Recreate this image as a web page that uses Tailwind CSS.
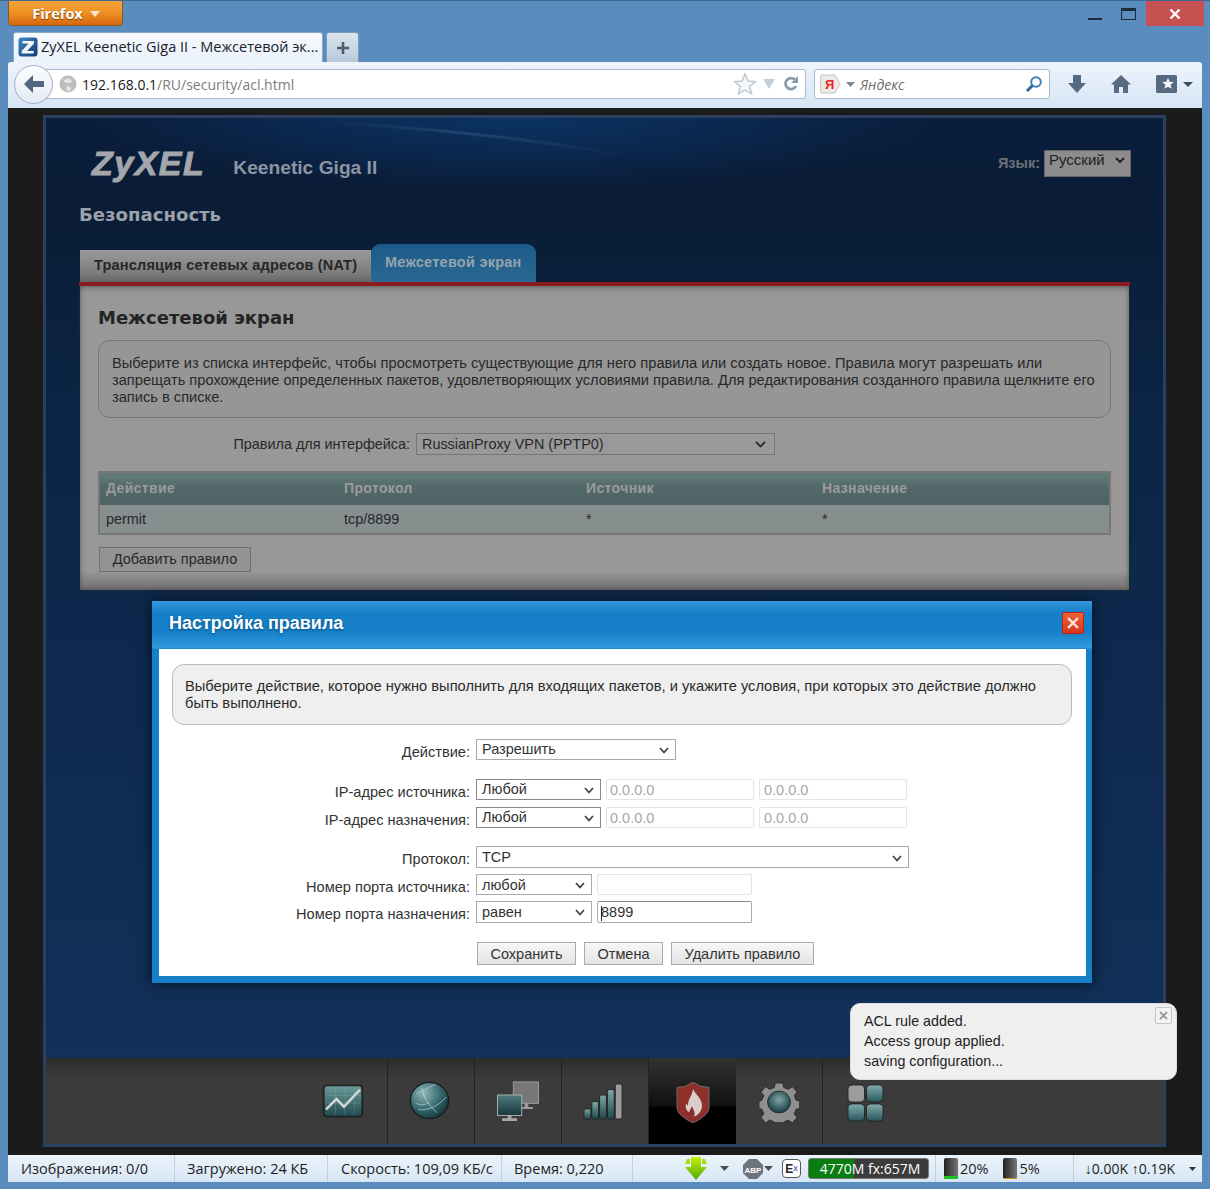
<!DOCTYPE html>
<html lang="ru">
<head>
<meta charset="utf-8">
<title>ZyXEL Keenetic Giga II</title>
<script src="https://cdn.jsdelivr.net/npm/@tailwindcss/browser@4"></script>
</head>
<body class="m-0">
<div class="relative w-[1210px] h-[1189px] overflow-hidden flex flex-col bg-[#5a8dbd] border-t border-[#3d688f] font-['Liberation_Sans',Arial,sans-serif]">

  <!-- title row -->
  <div class="h-[31px] flex items-start pl-[8px] shrink-0">
    <div class="w-[115px] h-[26px] -mt-px pt-[2px] rounded-b-[4px] border border-[#8a5a22] bg-[linear-gradient(#f4a23c,#ef9425_45%,#d7660f)] flex items-center justify-center gap-[7px] text-white font-bold text-[14.500px] font-['Open_Sans',sans-serif] pl-[1px] [text-shadow:0_1px_1px_#7a3c00]">
      <span>Firefox</span>
      <svg width="10" height="6" viewBox="0 0 10 6"><path d="M0 0h10L5 6z" fill="#fbe6cb"/></svg>
    </div>
    <div class="ml-auto flex items-start">
      <div class="w-[14px] h-[2px] bg-[#1c2b3a] mt-[17px] mr-[19px]"></div>
      <div class="w-[15px] h-[12px] border border-[#1c2b3a] border-t-[3px] mt-[7px] mr-[10px]"></div>
      <div class="w-[58px] h-[25px] mr-[6px] bg-[#c75050] flex items-center justify-center">
        <svg width="12" height="12" viewBox="0 0 12 12"><path d="M1.500 1.500l9 9M10.500 1.500l-9 9" stroke="#fff" stroke-width="2.400"/></svg>
      </div>
    </div>
  </div>

  <!-- tabs -->
  <div class="h-[30px] shrink-0 flex items-end pl-[13px] gap-[3px]">
    <div class="w-[310px] h-[30px] rounded-t-[3px] border border-b-0 border-[#8fa9c4] bg-[linear-gradient(#f7fafd,#e9f1fa)] flex items-center pl-[4px] gap-[3px] pb-px text-[#16212c] text-[14.500px] font-['Open_Sans',sans-serif] whitespace-nowrap overflow-hidden">
      <svg width="20" height="20" viewBox="0 0 20 20" class="shrink-0">
        <defs><linearGradient id="fav" x1="0" y1="0" x2="1" y2="1"><stop offset="0" stop-color="#3f86c8"/><stop offset="1" stop-color="#113a70"/></linearGradient></defs>
        <rect x="0.500" y="0.500" width="19" height="19" rx="3" fill="url(#fav)"/>
        <path d="M4.500 4h11.500v2.600L9 14h6.800v2.600H3.600v-2.600L10.600 6.600H4.500z" fill="#f3f6fa"/>
      </svg>
      <span>ZyXEL Keenetic Giga II - Межсетевой эк...</span>
    </div>
    <div class="w-[33px] h-[30px] rounded-t-[3px] border border-b-0 border-[#7c99b8] bg-[linear-gradient(#dbe5ef,#b9c9da)] flex items-center justify-center">
      <svg width="14" height="14" viewBox="0 0 14 14"><path d="M7 1v12M1 7h12" stroke="#4f5d6b" stroke-width="2.600"/></svg>
    </div>
  </div>

  <!-- nav -->
  <div class="relative z-10 h-[46px] shrink-0 mx-[8px] pb-[2px] rounded-t-[3px] bg-[linear-gradient(#eef4fc,#d6e5f5)] flex items-center font-['Open_Sans',sans-serif]">
    <div class="relative z-10 ml-[6px] w-[39px] h-[39px] rounded-full border border-[#9eb0c3] bg-[linear-gradient(#fdfeff,#e3eaf2)] flex items-center justify-center shrink-0">
      <svg width="22" height="20" viewBox="0 0 22 20"><path d="M10 1L1 10l9 9v-6h11V7H10z" fill="#50677f"/></svg>
    </div>
    <div class="-ml-[13px] w-[766px] h-[30px] rounded-r-[3px] border border-[#a9bace] bg-white flex items-center pl-[18px] pr-[6px] shrink-0">
      <svg width="18" height="18" viewBox="0 0 18 18" class="shrink-0"><circle cx="9" cy="9" r="8.500" fill="#bdbdbd"/><path d="M4 4c2 1 4 0 6-1 1 2 3 2 3 4-2 0-3 2-5 1S5 7 4 4zM8 11c2 0 4 1 4 3l-3 3c-1-2-2-3-1-6z" fill="#e6e6e6"/></svg>
      <span class="ml-[5px] text-[14px] text-[#1b1b1b] whitespace-nowrap">192.168.0.1<span class="text-[#7d7d7d]">/RU/security/acl.html</span></span>
      <svg width="24" height="24" viewBox="0 0 24 24" class="ml-auto mr-[-1px]"><path d="M12 2l3 7 7.500.6-5.700 4.900 1.800 7.300L12 18l-6.600 3.800 1.800-7.300L1.500 9.600 9 9z" fill="#f6f6f6" stroke="#bcc6d0" stroke-width="1.400"/></svg>
      <svg width="12" height="10" viewBox="0 0 12 10" class="ml-[7px]"><path d="M0 0h12L6 10z" fill="#c3cfdb"/></svg>
      <svg width="16" height="16" viewBox="0 0 16 16" class="ml-[8px]"><path d="M13 10a5.500 5.500 0 1 1-1-6.200" fill="none" stroke="#8a9cae" stroke-width="2.800"/><path d="M15 0v7H8z" fill="#8a9cae"/></svg>
    </div>
    <div class="ml-[8px] w-[236px] h-[30px] rounded-[3px] border border-[#a9bace] bg-white flex items-center pl-[5px] pr-[5px] shrink-0">
      <svg width="21" height="20" viewBox="0 0 21 20" class="shrink-0"><path d="M2 1h13l5 9-5 9H2a1.500 1.500 0 0 1-1.500-1.500v-15A1.500 1.500 0 0 1 2 1z" fill="#eceae6" stroke="#c6c6c6"/><text x="5" y="15" font-size="13" font-weight="700" fill="#e8231d" font-family="Liberation Sans">Я</text></svg>
      <svg width="9" height="5" viewBox="0 0 9 5" class="ml-[5px]"><path d="M0 0h9L4.500 5z" fill="#7d8790"/></svg>
      <span class="ml-[5px] text-[14px] italic text-[#6f6f6f]">Яндекс</span>
      <svg width="18" height="18" viewBox="0 0 18 18" class="ml-auto mr-[1px]"><circle cx="11" cy="7" r="4.800" fill="none" stroke="#3c80bd" stroke-width="2"/><path d="M7.500 10.500L2 16" stroke="#2d6aa5" stroke-width="3"/></svg>
    </div>
    <svg width="18" height="20" viewBox="0 0 18 20" class="ml-[18px]"><path d="M5 1h8v8h5l-9 10L0 9h5z" fill="#566b81"/></svg>
    <svg width="20" height="20" viewBox="0 0 20 20" class="ml-[25px]"><path d="M10 1L0 10.500h3V19h5v-6h4v6h5v-8.500h3z" fill="#566b81"/></svg>
    <svg width="21" height="18" viewBox="0 0 21 18" class="ml-[25px]"><rect width="21" height="18" rx="1.500" fill="#566b81"/><path d="M12 3l1.700 3.700 4 .4-3 2.700.9 4-3.600-2.100-3.600 2.100.9-4-3-2.700 4-.4z" fill="#f3f6fa"/></svg>
    <svg width="10" height="5" viewBox="0 0 10 5" class="ml-[6px]"><path d="M0 0h10L5 5z" fill="#3b4d5f"/></svg>
  </div>

  <!-- browser content -->
  <div class="h-[1047px] shrink-0 mx-[8px] bg-[#1b1b1b] pt-[7px] pl-[35px] pr-[36px]">
    <div class="h-[1032px] border-[3px] border-[#2d3f5f] flex flex-col">
      <div class="relative h-[940px] shrink-0 bg-[radial-gradient(ellipse_420px_70px_at_42%_0%,#0b3364,transparent),linear-gradient(#0a1e3c,#0a1c36_90px,#0b2546_300px,#123059)]">
        <svg class="absolute left-[270px] top-0" width="320" height="50" viewBox="0 0 320 50" fill="none">
          <defs><linearGradient id="s" x1="0" y1="0" x2="1" y2="0"><stop offset="0" stop-color="#6f8fb5" stop-opacity="0"/><stop offset=".5" stop-color="#6f8fb5" stop-opacity=".22"/><stop offset="1" stop-color="#6f8fb5" stop-opacity="0"/></linearGradient></defs>
          <path d="M0 3c90 6 190 14 310 34" stroke="url(#s)" stroke-width="3"/>
        </svg>
        <!-- header -->
        <div class="relative h-[82px] flex items-start">
          <div class="ml-[46px] mt-[26px] text-[34px] leading-[38px] font-bold italic tracking-[1.500px] text-[#a3a6ab] [-webkit-text-stroke:1px_#a3a6ab]">ZyXEL</div>
          <div class="ml-[28px] mt-[38px] text-[19.200px] leading-[24px] font-bold text-[#8b95a4]">Keenetic Giga II</div>
          <div class="ml-auto mr-[32px] mt-[32px] flex items-center gap-[4px]">
            <span class="text-[14.500px] font-bold text-[#6b7077]">Язык:</span>
            <div class="w-[87px] h-[27px] bg-[#8c8c8c] border border-[#666] flex items-start justify-between pl-[4px] pr-[5px] text-[15px] leading-[18px] text-[#222]">
              <span>Русский</span>
              <svg width="10" height="7" viewBox="0 0 10 7" class="mt-[6px]"><path d="M1 1l4 4L9 1" fill="none" stroke="#222" stroke-width="2"/></svg>
            </div>
          </div>
        </div>
        <div class="relative ml-[33px] h-[30px] text-[18.100px] leading-[30px] font-bold font-['DejaVu_Sans',sans-serif] text-[#9aa1aa]">Безопасность</div>
        <!-- tabs -->
        <div class="relative ml-[33px] mt-[14px] h-[38px] flex items-end">
          <div class="w-[291px] h-[32px] ml-px bg-[linear-gradient(#9a9a9a,#7e7e7e_70%,#666)] flex items-center pl-[14px] pb-[1px] text-[14.500px] font-bold tracking-[0.2px] text-[#262626] whitespace-nowrap">Трансляция сетевых адресов (NAT)</div>
          <div class="w-[165px] h-[38px] rounded-t-[9px] bg-[linear-gradient(#1d5a88,#2a6792)] flex items-center pl-[14px] pb-[1px] text-[14.500px] font-bold tracking-[0.25px] text-[#96a4ae] whitespace-nowrap">Межсетевой экран</div>
        </div>
        <!-- panel -->
        <div class="relative ml-[33px] w-[1051px] h-[4px] bg-[#8a1c20]"></div>
        <div class="relative ml-[33px] w-[1051px] h-[305px] border-r border-b border-l border-[#16263a] bg-[linear-gradient(#8a8a8a,#989898_10px,#989898_285px,#6f6f6f)] shadow-[inset_0_0_5px_#555] pt-[18px] px-[18px]">
          <div class="h-[27px] text-[18px] leading-[27px] font-bold font-['DejaVu_Sans',sans-serif] text-[#242424]">Межсетевой экран</div>
          <div class="mt-[9px] h-[78px] rounded-[12px] border border-[#777] bg-[#969696] pl-[13px] pr-[12px] pt-[14px] text-[14.650px] leading-[17px] text-[#282828]">Выберите из списка интерфейс, чтобы просмотреть существующие для него правила или создать новое. Правила могут разрешать или запрещать прохождение определенных пакетов, удовлетворяющих условиями правила. Для редактирования созданного правила щелкните его запись в списке.</div>
          <div class="mt-[14px] flex items-center">
            <span class="w-[312px] text-right pt-[2px] text-[14.400px] text-[#282828]">Правила для интерфейса:</span>
            <div class="ml-[6px] w-[359px] h-[22px] pt-[2px] bg-[#999] border border-[#777] flex items-center justify-between pl-[5px] pr-[8px] text-[14.400px] text-[#282828]">
              <span>RussianProxy VPN (PPTP0)</span>
              <svg width="11" height="7" viewBox="0 0 11 7"><path d="M1 1l4.500 4.500L10 1" fill="none" stroke="#2c2c2c" stroke-width="1.800"/></svg>
            </div>
          </div>
          <div class="mt-[15px] h-[64px] border-2 border-[#777] flex flex-col">
            <div class="h-[32px] bg-[linear-gradient(#5f7878,#5f7878_4px,#536969_14px,#4e6464)] grid grid-cols-[238px_242px_236px_1fr] items-center pl-[6px] text-[14px] font-bold tracking-[0.36px] text-[#9b9b9b]">
              <span>Действие</span><span>Протокол</span><span>Источник</span><span>Назначение</span>
            </div>
            <div class="flex-1 pt-[2px] bg-[#868e8e] grid grid-cols-[238px_242px_236px_1fr] items-center pl-[6px] text-[14.400px] text-[#23282c]">
              <span>permit</span><span>tcp/8899</span><span>*</span><span>*</span>
            </div>
          </div>
          <div class="mt-[12px] ml-px w-[152px] h-[25px] pt-[2px] border border-[#6f6f6f] bg-[#939393] flex items-center justify-center text-[14.500px] text-[#282828]">Добавить правило</div>
        </div>
        <!-- /panel -->
      </div>

      <!-- bottom menu -->
      <div class="h-[86px] shrink-0 bg-[linear-gradient(#2c2c2c,#3b3b3b_20px)] flex pl-[255px]">
        <div class="w-[87px] h-full border-r border-[#222] flex items-start justify-center pt-[26px]">
          <svg width="42" height="34" viewBox="0 0 44 36" class="-ml-[3px]">
            <defs><linearGradient id="t" x1="0" y1="0" x2="0" y2="1"><stop offset="0" stop-color="#6b9a9c"/><stop offset="1" stop-color="#1f4a4f"/></linearGradient></defs>
            <rect x="1.500" y="1.500" width="41" height="33" rx="4" fill="url(#t)" stroke="#222" stroke-width="2"/>
            <path d="M4 27l11-11 8 8L40 6" fill="none" stroke="#d6d8d8" stroke-width="2.600"/>
            <path d="M4 20h36M4 12h36M14 4v28M24 4v28M34 4v28" stroke="#a8c0c0" stroke-opacity=".25"/>
          </svg>
        </div>
        <div class="w-[87px] h-full border-r border-[#222] flex items-start justify-center pt-[23px]">
          <svg width="41" height="39" viewBox="0 0 44 44" preserveAspectRatio="none" class="-ml-[3px]">
            <defs><radialGradient id="g" cx=".35" cy=".3" r=".8"><stop offset="0" stop-color="#8fb7b8"/><stop offset=".6" stop-color="#2f6368"/><stop offset="1" stop-color="#0f2e32"/></radialGradient></defs>
            <circle cx="22" cy="22" r="20.500" fill="url(#g)" stroke="#1c1c1c" stroke-width="1.500"/>
            <path d="M8 14c8-2 14-8 20-10M14 8c1 10 8 20 16 28M10 32c8 2 20-2 30-14M22 24c-5 3-9 4-15 1" fill="none" stroke="#c6dadb" stroke-opacity=".7"/>
          </svg>
        </div>
        <div class="w-[87px] h-full border-r border-[#222] flex items-start justify-center pt-[23px]">
          <svg width="44" height="41" viewBox="0 0 46 44">
            <defs><linearGradient id="m" x1="0" y1="0" x2="0" y2="1"><stop offset="0" stop-color="#4d7b7e"/><stop offset="1" stop-color="#17383c"/></linearGradient></defs>
            <rect x="18" y="1" width="27" height="23" fill="#777" stroke="#a0a0a0"/>
            <path d="M30 24h4v4h5v2H26v-2h4z" fill="#9a9a9a"/>
            <rect x="1" y="15" width="26" height="22" fill="url(#m)" stroke="#b0b0b0"/>
            <path d="M12 37h4v3h6v3H6v-3h6z" fill="#a8a8a8"/>
          </svg>
        </div>
        <div class="w-[87px] h-full border-r border-[#222] flex items-start justify-center pt-[25px]">
          <svg width="41" height="37" viewBox="0 0 42 40" preserveAspectRatio="none" class="-ml-[3px]">
            <defs><linearGradient id="b" x1="0" y1="0" x2="0" y2="1"><stop offset="0" stop-color="#7fa8aa"/><stop offset="1" stop-color="#1d474c"/></linearGradient></defs>
            <rect x="1" y="28" width="7" height="11" rx="2" fill="url(#b)" stroke="#222"/>
            <rect x="9" y="20" width="7" height="19" rx="2" fill="url(#b)" stroke="#222"/>
            <rect x="17" y="13" width="7" height="26" rx="2" fill="url(#b)" stroke="#222"/>
            <rect x="25" y="7" width="7" height="32" rx="2" fill="url(#b)" stroke="#222"/>
            <rect x="33" y="1" width="7" height="38" rx="2" fill="#9c9c9c" stroke="#222"/>
          </svg>
        </div>
        <div class="w-[87px] h-full bg-[linear-gradient(#333,#101010_48px,#000_49px)] flex items-start justify-center pt-[24px]">
          <svg width="34" height="41" viewBox="0 0 34 46" preserveAspectRatio="none">
            <path d="M17 0l8 5 8 1v23c0 7-9 13-16 17C10 42 1 36 1 29V6l8-1z" fill="#8e2f2b" stroke="#6e6e6e"/>
            <path d="M17 7c1 6 8 9 9 19 0 7-4 11-8 13 2-5-1-8-2-12-1 3-2 4-3 7-3-2-4-6-3-10 1 1 1 2 2 2 0-7 5-12 5-19z" fill="#d8cfcd"/>
          </svg>
        </div>
        <div class="w-[87px] h-full border-r border-[#222] flex items-start justify-center pt-[24px]">
          <svg width="40" height="40" viewBox="0 0 42 44" preserveAspectRatio="none">
            <defs><radialGradient id="c" cx=".5" cy=".4" r=".6"><stop offset="0" stop-color="#7ea6a8"/><stop offset="1" stop-color="#173c42"/></radialGradient></defs>
            <path d="M17 1h8l1 5 5 2 4-3 5 6-3 4 2 5 4 1v8l-4 1-2 5 3 4-5 6-4-3-5 2-1 4h-8l-1-4-5-2-4 3-5-6 3-4-2-5-3-1v-8l3-1 2-5-3-4 5-6 4 3 5-2z" fill="#8f8f8f" stroke="#262626"/>
            <circle cx="21" cy="22" r="12" fill="url(#c)" stroke="#2a2a2a"/>
          </svg>
        </div>
        <div class="w-[87px] h-full flex items-start justify-center pt-[26px]">
          <svg width="37" height="38" viewBox="0 0 38 42" preserveAspectRatio="none" class="-ml-[2px]">
            <defs><linearGradient id="q" x1="0" y1="0" x2="0" y2="1"><stop offset="0" stop-color="#82adae"/><stop offset="1" stop-color="#26555a"/></linearGradient></defs>
            <rect x="1" y="1" width="17" height="19" rx="4" fill="#9c9c9c" stroke="#222"/>
            <rect x="20" y="1" width="17" height="19" rx="4" fill="url(#q)" stroke="#222"/>
            <rect x="1" y="22" width="17" height="19" rx="4" fill="url(#q)" stroke="#222"/>
            <rect x="20" y="22" width="17" height="19" rx="4" fill="url(#q)" stroke="#222"/>
          </svg>
        </div>
      </div>
    </div>
  </div>

  <!-- status bar -->
  <div class="h-[27px] shrink-0 mx-[8px] bg-[linear-gradient(#eaf3fb,#d8e7f5)] flex items-center text-[14.500px] text-[#1d1d1d] font-['Open_Sans',sans-serif] whitespace-nowrap">
    <div class="w-[167px] pl-[13px] border-r border-[#c3cfda] h-full flex items-center">Изображения: 0/0</div>
    <div class="w-[153px] pl-[12px] border-r border-[#c3cfda] h-full flex items-center">Загружено: 24 КБ</div>
    <div class="w-[174px] pl-[13px] border-r border-[#c3cfda] h-full flex items-center">Скорость: 109,09 КБ/с</div>
    <div class="w-[131px] pl-[12px] border-r border-[#c3cfda] h-full flex items-center">Время: 0,220</div>
    <svg width="24" height="24" viewBox="0 0 24 24" class="ml-[51px]">
      <defs><linearGradient id="d" x1="0" y1="0" x2="0" y2="1"><stop offset="0" stop-color="#c8f000"/><stop offset="1" stop-color="#4fa510"/></linearGradient></defs>
      <path d="M7 0h10v10h6L12 23 1 10h6z" fill="url(#d)"/>
      <path d="M3 2h3v5H1zM18 2h3l2 5h-5z" fill="#a6dc20"/>
    </svg>
    <svg width="9" height="5" viewBox="0 0 9 5" class="ml-[12px]"><path d="M0 0h9L4.500 5z" fill="#4a4f55"/></svg>
    <svg width="20" height="20" viewBox="0 0 20 20" class="ml-[14px]"><path d="M6 0h8l6 6v8l-6 6H6l-6-6V6z" fill="#6c737a"/><text x="10" y="13.500" text-anchor="middle" font-size="8" font-weight="700" fill="#fff" font-family="Liberation Sans">ABP</text></svg>
    <svg width="9" height="5" viewBox="0 0 9 5" class="ml-[1px]"><path d="M0 0h9L4.500 5z" fill="#4a4f55"/></svg>
    <div class="ml-[9px] w-[19px] h-[19px] rounded-[4px] border border-[#555] bg-white flex items-center justify-center text-[12px] font-bold leading-none font-['Liberation_Sans',sans-serif]"><span class="text-[#222]">E</span><span class="text-[#3a3aa0] text-[9px] font-normal">x</span></div>
    <div class="ml-[7px] w-[121px] h-[21px] pl-[3px] rounded-[3px] border border-[#777] bg-[linear-gradient(90deg,#0a7d10_0,#0a7d10_45px,#3c3c3c_45px,#3c3c3c)] flex items-center justify-center text-[14px] text-white">4770M fx:657M</div>
    <div class="ml-[6px] w-px h-full bg-[#c3cfda]"></div>
    <div class="ml-[8px] w-[14px] h-[21px] rounded-[2px] bg-[linear-gradient(90deg,#222,#777)] flex items-end"><div class="w-full h-[3px] bg-[#1cc41c]"></div></div>
    <span class="ml-[2px]">20%</span>
    <div class="ml-[14px] w-[14px] h-[21px] rounded-[2px] bg-[linear-gradient(90deg,#222,#777)] flex items-end"><div class="w-full h-[1px] bg-[#e08a20]"></div></div>
    <span class="ml-[3px]">5%</span>
    <div class="ml-[33px] w-px h-full bg-[#c3cfda]"></div>
    <span class="ml-[11px] text-[14px]">↓0.00K ↑0.19K</span>
    <svg width="7" height="4" viewBox="0 0 7 4" class="ml-[14px]"><path d="M0 0h7L3.500 4z" fill="#333"/></svg>
  </div>

  <!-- dialog -->
  <div class="absolute left-[152px] top-[600px] w-[940px] h-[382px] bg-[linear-gradient(#3597dc,#1580c8_12px,#1580c8_30px,#3398dc_47px,#1580c8_48px)] pt-[48px] pl-[7px] shadow-[0_0_12px_#04101f]">
    <div class="absolute left-[17px] top-[10px] text-[18px] leading-[24px] font-bold text-white [text-shadow:0_1px_3px_#0a4a7a]">Настройка правила</div>
    <div class="absolute left-[910px] top-[11px] w-[22px] h-[22px] rounded-[2px] border border-[#c4201a] bg-[linear-gradient(#f0603a,#d8381a)] flex items-center justify-center">
      <svg width="14" height="14" viewBox="0 0 14 14"><path d="M2 2l10 10M12 2L2 12" stroke="#fbe8e0" stroke-width="2.400"/></svg>
    </div>
    <div class="w-[927px] h-[327px] bg-white pt-[15px] text-[14.500px] text-[#333]">
      <div class="ml-[13px] w-[900px] h-[61px] rounded-[12px] border border-[#bbb] bg-[#efefef] pl-[12px] pr-[12px] pt-[13px] text-[14.670px] leading-[17px] text-[#2b2b2b]">Выберите действие, которое нужно выполнить для входящих пакетов, и укажите условия, при которых это действие должно быть выполнено.</div>

      <div class="mt-[14px] flex items-center h-[21px]">
        <span class="w-[311px] text-right pt-[6px] text-[14.600px]">Действие:</span>
        <div class="ml-[6px] w-[200px] h-full pt-px border border-[#aaa] flex items-center justify-between pl-[5px] pr-[6px]"><span>Разрешить</span><svg width="10" height="7" viewBox="0 0 10 7"><path d="M1 1l4 4.500L9 1" fill="none" stroke="#444" stroke-width="1.800"/></svg></div>
      </div>

      <div class="mt-[19px] flex items-center h-[21px]">
        <span class="w-[311px] text-right pt-[6px] text-[14.600px]">IP-адрес источника:</span>
        <div class="ml-[6px] w-[125px] h-full pt-px border border-[#888] flex items-center justify-between pl-[5px] pr-[6px]"><span>Любой</span><svg width="10" height="7" viewBox="0 0 10 7"><path d="M1 1l4 4.500L9 1" fill="none" stroke="#444" stroke-width="1.800"/></svg></div>
        <input disabled value="0.0.0.0" class="ml-[5px] w-[148px] h-full rounded-[2px] border border-[#e4e4e4] bg-white pl-[3px] text-[#a8a8a8]">
        <input disabled value="0.0.0.0" class="ml-[5px] w-[148px] h-full rounded-[2px] border border-[#e4e4e4] bg-white pl-[4px] text-[#a8a8a8]">
      </div>
      <div class="mt-[7px] flex items-center h-[21px]">
        <span class="w-[311px] text-right pt-[6px] text-[14.600px]">IP-адрес назначения:</span>
        <div class="ml-[6px] w-[125px] h-full pt-px border border-[#888] flex items-center justify-between pl-[5px] pr-[6px]"><span>Любой</span><svg width="10" height="7" viewBox="0 0 10 7"><path d="M1 1l4 4.500L9 1" fill="none" stroke="#444" stroke-width="1.800"/></svg></div>
        <input disabled value="0.0.0.0" class="ml-[5px] w-[148px] h-full rounded-[2px] border border-[#e4e4e4] bg-white pl-[3px] text-[#a8a8a8]">
        <input disabled value="0.0.0.0" class="ml-[5px] w-[148px] h-full rounded-[2px] border border-[#e4e4e4] bg-white pl-[4px] text-[#a8a8a8]">
      </div>

      <div class="mt-[18px] flex items-center h-[22px]">
        <span class="w-[311px] text-right pt-[6px] text-[14.600px]">Протокол:</span>
        <div class="ml-[6px] w-[433px] h-full pt-[2px] border border-[#aaa] flex items-center justify-between pl-[5px] pr-[6px]"><span>TCP</span><svg width="10" height="7" viewBox="0 0 10 7"><path d="M1 1l4 4.500L9 1" fill="none" stroke="#444" stroke-width="1.800"/></svg></div>
      </div>
      <div class="mt-[6px] flex items-center h-[21px]">
        <span class="w-[311px] text-right pt-[6px] text-[14.600px]">Номер порта источника:</span>
        <div class="ml-[6px] w-[116px] h-full pt-[2px] border border-[#aaa] flex items-center justify-between pl-[5px] pr-[6px]"><span>любой</span><svg width="10" height="7" viewBox="0 0 10 7"><path d="M1 1l4 4.500L9 1" fill="none" stroke="#444" stroke-width="1.800"/></svg></div>
        <input disabled class="ml-[5px] w-[155px] h-full rounded-[2px] border border-[#e4e4e4] bg-white">
      </div>
      <div class="mt-[6px] flex items-center h-[22px]">
        <span class="w-[311px] text-right pt-[6px] text-[14.600px]">Номер порта назначения:</span>
        <div class="ml-[6px] w-[116px] h-full pt-px border border-[#aaa] flex items-center justify-between pl-[5px] pr-[6px]"><span>равен</span><svg width="10" height="7" viewBox="0 0 10 7"><path d="M1 1l4 4.500L9 1" fill="none" stroke="#444" stroke-width="1.800"/></svg></div>
        <div class="ml-[5px] w-[155px] h-full pt-[2px] rounded-[2px] border border-[#aaa] border-t-[#8a8a8a] flex items-center pl-[3px]"><span class="w-px h-[15px] bg-[#222] -mr-px"></span><span>8899</span></div>
      </div>

      <div class="mt-[19px] ml-[318px] flex h-[23px] gap-[8px]">
        <div class="w-[99px] pt-[2px] border border-[#aaa] bg-[linear-gradient(#f7f7f7,#e3e3e3)] flex items-center justify-center">Сохранить</div>
        <div class="w-[79px] pt-[2px] border border-[#aaa] bg-[linear-gradient(#f7f7f7,#e3e3e3)] flex items-center justify-center">Отмена</div>
        <div class="w-[143px] pt-[2px] border border-[#aaa] bg-[linear-gradient(#f7f7f7,#e3e3e3)] flex items-center justify-center">Удалить правило</div>
      </div>
    </div>
  </div>

  <!-- toast -->
  <div class="absolute left-[850px] top-[1002px] w-[327px] h-[77px] rounded-[10px] border border-[#ddd] bg-[#efefef] pl-[13px] pt-[7px] text-[14.300px] leading-[20px] text-[#1d1d1d]">
    <div>ACL rule added.</div>
    <div>Access group applied.</div>
    <div>saving configuration...</div>
    <div class="absolute right-[4px] top-[3px] w-[17px] h-[17px] rounded-[2px] border border-[#c6c6c6] bg-[#f3f3f3] flex items-center justify-center">
      <svg width="9" height="9" viewBox="0 0 9 9"><path d="M1 1l7 7M8 1L1 8" stroke="#9a9a9a" stroke-width="1.800"/></svg>
    </div>
  </div>
</div>
</body>
</html>
